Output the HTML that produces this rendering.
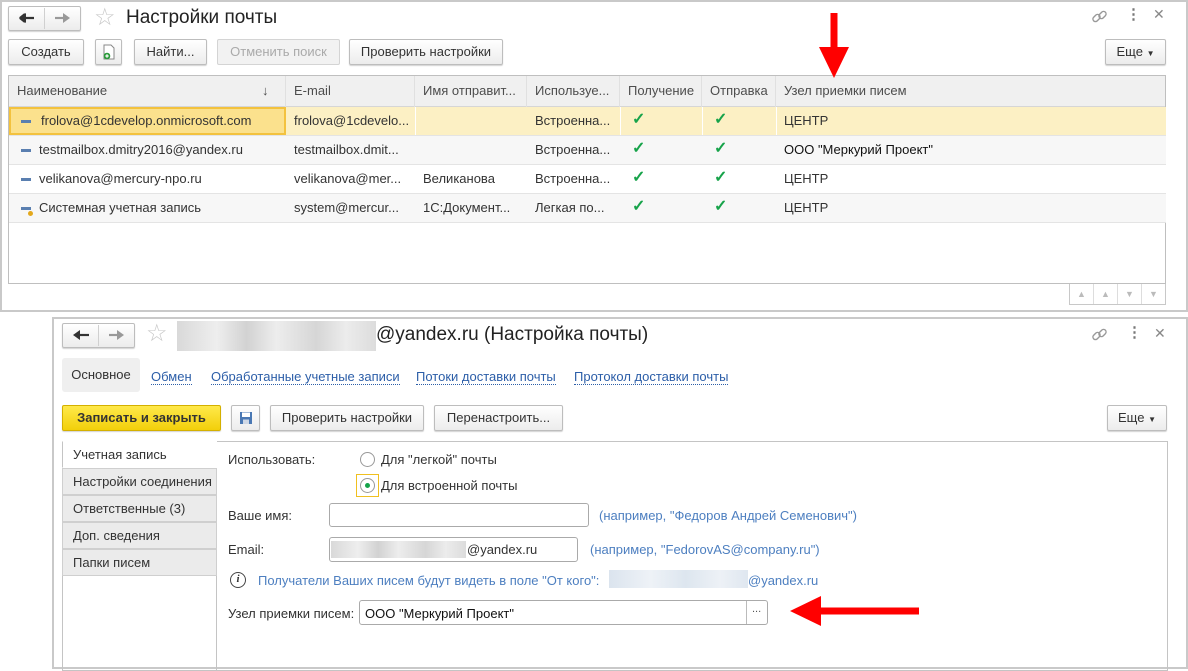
<!DOCTYPE html>
<html><head><meta charset="utf-8"><style>
*{box-sizing:border-box;margin:0;padding:0}
body{width:1188px;height:669px;background:#fff;position:relative;overflow:hidden;font-family:"Liberation Sans",Arial,sans-serif;font-size:13px;color:#333}
.a{position:absolute;white-space:nowrap}
.win{position:absolute;border:2px solid #c9c9c9;background:#fff}
.btn{position:absolute;height:26px;border:1px solid #bdbdbd;border-radius:2px;background:linear-gradient(#fff,#ececec);box-shadow:0 1px 1px rgba(0,0,0,.18);text-align:center;line-height:24px;font-size:13px;color:#333}
.nav{position:absolute;height:25px;border:1px solid #bdbdbd;border-radius:2px;background:linear-gradient(#fff,#ececec);box-shadow:0 1px 1px rgba(0,0,0,.18)}
.th{position:absolute;top:0;height:31px;line-height:30px;padding-left:8px;color:#4d4d4d;border-right:1px solid #e0e0e0}
.row{position:absolute;left:0;width:1157px;height:29px;border-bottom:1px solid #e4e4e4}
.cell{position:absolute;top:0;height:28px;line-height:28px;padding-left:8px;color:#333}
.ck{position:absolute;color:#17a34a;font-size:16px;font-weight:bold;top:1px}
.lnk{position:absolute;color:#2c5ea8;border-bottom:1px dotted #2c5ea8;line-height:15px}
.tab{position:absolute;left:62px;width:155px;height:27px;background:#ebebeb;border:1px solid #cfcfcf;line-height:25px;padding-left:10px;color:#333}
.hint{color:#4d7fc0}
.blur{position:absolute;background:linear-gradient(90deg,#d9d9d9,#eeeeee 20%,#d2d2d2 35%,#ededed 50%,#d6d6d6 70%,#ececec 85%,#dcdcdc)}
.inp{position:absolute;border:1px solid #aaa;border-radius:3px;background:#fff}
</style></head><body>

<!-- TOP WINDOW -->
<div class="win" style="left:0;top:0;width:1188px;height:312px"></div>
<div class="nav" style="left:8px;top:6px;width:73px"></div>
<div class="a" style="left:44px;top:8px;width:1px;height:21px;background:#d0d0d0"></div>
<svg class="a" style="left:19px;top:13px" width="16" height="10"><path d="M1 5h14M1 5l5-4M1 5l5 4" stroke="#333" stroke-width="2.2" fill="#333"/><polygon points="0,5 7,0 7,10" fill="#333"/></svg>
<svg class="a" style="left:54px;top:13px" width="16" height="10"><path d="M1 5h12" stroke="#999" stroke-width="2.2"/><polygon points="16,5 9,0 9,10" fill="#999"/></svg>
<div class="a" style="left:94px;top:3px;font-size:24px;color:#c8c8c8">&#9734;</div>
<div class="a" style="left:126px;top:7px;font-size:19px;color:#222">Настройки почты</div>
<svg class="a" style="left:1091px;top:8px" width="17" height="17" viewBox="0 0 17 17"><g fill="none" stroke="#999" stroke-width="1.4"><rect x="1.5" y="7.5" width="8" height="5" rx="2.5" transform="rotate(-45 5.5 10)"/><rect x="7.5" y="4.5" width="8" height="5" rx="2.5" transform="rotate(-45 11.5 7)"/></g></svg>
<div class="a" style="left:1126px;top:5px;font-size:15px;color:#777;font-weight:bold">&#8942;</div>
<div class="a" style="left:1153px;top:6px;font-size:14px;color:#888">&#10005;</div>

<div class="btn" style="left:8px;top:39px;width:76px">Создать</div>
<div class="btn" style="left:95px;top:39px;width:27px"><svg width="14" height="16" viewBox="0 0 14 16" style="margin-top:4px"><path d="M2 1h7l3 3v11H2z" fill="#fff" stroke="#888"/><circle cx="5" cy="12" r="3.3" fill="#2a9a3a"/><path d="M3.3 12h3.4M5 10.3v3.4" stroke="#fff" stroke-width="1.2"/></svg></div>
<div class="btn" style="left:134px;top:39px;width:73px">Найти...</div>
<div class="btn" style="left:217px;top:39px;width:123px;color:#aaa;box-shadow:none;background:#f2f2f2;border-color:#d4d4d4">Отменить поиск</div>
<div class="btn" style="left:349px;top:39px;width:154px">Проверить настройки</div>
<div class="btn" style="left:1105px;top:39px;width:61px">Еще <span style="font-size:8px">&#9660;</span></div>

<div class="a" style="left:8px;top:75px;width:1158px;height:209px;border:1px solid #bfbfbf">
 <div class="a" style="left:0;top:0;width:1156px;height:31px;background:#f0f0f0;border-bottom:1px solid #d6d6d6"></div>
 <div class="th" style="left:0;width:277px">Наименование<span style="position:absolute;left:253px">&#8595;</span></div>
 <div class="th" style="left:277px;width:129px">E-mail</div>
 <div class="th" style="left:406px;width:112px">Имя отправит...</div>
 <div class="th" style="left:518px;width:93px">Используе...</div>
 <div class="th" style="left:611px;width:82px">Получение</div>
 <div class="th" style="left:693px;width:74px">Отправка</div>
 <div class="th" style="left:767px;width:389px;border-right:none">Узел приемки писем</div>

 <div class="row" style="top:31px;background:#fcf0c4">
  <div class="cell" style="left:0;width:277px;background:#fbe18d;border:2px solid #f3c23e;line-height:24px;padding-left:30px">frolova@1cdevelop.onmicrosoft.com</div>
  <div class="cell" style="left:277px">frolova@1cdevelo...</div>
  <div class="a" style="left:406px;top:0;height:28px;border-left:1px solid #fff"></div>
  <div class="cell" style="left:518px">Встроенна...</div>
  <div class="a" style="left:611px;top:0;height:28px;border-left:1px solid #fff"></div>
  <div class="a" style="left:693px;top:0;height:28px;border-left:1px solid #fff"></div>
  <div class="a" style="left:767px;top:0;height:28px;border-left:1px solid #fff"></div>
  <div class="cell" style="left:767px">ЦЕНТР</div>
 </div>
 <div class="row" style="top:60px;background:#f7f7f7">
  <div class="cell" style="left:0;padding-left:30px">testmailbox.dmitry2016@yandex.ru</div>
  <div class="cell" style="left:277px">testmailbox.dmit...</div>
  <div class="cell" style="left:518px">Встроенна...</div>
  <div class="cell" style="left:767px;color:#111">ООО "Меркурий Проект"</div>
 </div>
 <div class="row" style="top:89px;background:#fff">
  <div class="cell" style="left:0;padding-left:30px">velikanova@mercury-npo.ru</div>
  <div class="cell" style="left:277px">velikanova@mer...</div>
  <div class="cell" style="left:406px">Великанова</div>
  <div class="cell" style="left:518px">Встроенна...</div>
  <div class="cell" style="left:767px">ЦЕНТР</div>
 </div>
 <div class="row" style="top:118px;background:#f7f7f7">
  <div class="cell" style="left:0;padding-left:30px">Системная учетная запись</div>
  <div class="cell" style="left:277px">system@mercur...</div>
  <div class="cell" style="left:406px">1С:Документ...</div>
  <div class="cell" style="left:518px">Легкая по...</div>
  <div class="cell" style="left:767px">ЦЕНТР</div>
 </div>
 <div class="a" style="left:12px;top:44px;width:10px;height:3px;background:#5a7fb0"></div>
 <div class="a" style="left:12px;top:73px;width:10px;height:3px;background:#5a7fb0"></div>
 <div class="a" style="left:12px;top:102px;width:10px;height:3px;background:#5a7fb0"></div>
 <div class="a" style="left:12px;top:131px;width:10px;height:3px;background:#5a7fb0"></div>
 <div class="a" style="left:19px;top:135px;width:5px;height:5px;border-radius:50%;background:#e3a81c"></div>
 <div class="ck" style="left:623px;top:33px">&#10003;</div><div class="ck" style="left:705px;top:33px">&#10003;</div>
 <div class="ck" style="left:623px;top:62px">&#10003;</div><div class="ck" style="left:705px;top:62px">&#10003;</div>
 <div class="ck" style="left:623px;top:91px">&#10003;</div><div class="ck" style="left:705px;top:91px">&#10003;</div>
 <div class="ck" style="left:623px;top:120px">&#10003;</div><div class="ck" style="left:705px;top:120px">&#10003;</div>
</div>
<div class="a" style="left:1069px;top:284px;width:97px;height:21px;border:1px solid #c8c8c8;border-top:none;background:#fff;color:#bbb;font-size:9px;display:flex">
 <div style="flex:1;text-align:center;line-height:20px;border-right:1px solid #ddd">&#9650;</div>
 <div style="flex:1;text-align:center;line-height:20px;border-right:1px solid #ddd">&#9650;</div>
 <div style="flex:1;text-align:center;line-height:20px;border-right:1px solid #ddd">&#9660;</div>
 <div style="flex:1;text-align:center;line-height:20px">&#9660;</div>
</div>
<svg class="a" style="left:815px;top:12px" width="38" height="68"><rect x="15.5" y="1" width="7" height="36" fill="#f00"/><polygon points="4,35 34,35 19,66" fill="#f00"/></svg>

<!-- BOTTOM WINDOW -->
<div class="win" style="left:52px;top:317px;width:1136px;height:352px"></div>
<div class="nav" style="left:62px;top:323px;width:73px"></div>
<div class="a" style="left:98px;top:325px;width:1px;height:21px;background:#d0d0d0"></div>
<svg class="a" style="left:73px;top:330px" width="16" height="10"><path d="M3 5h13" stroke="#333" stroke-width="2.2"/><polygon points="0,5 7,0 7,10" fill="#333"/></svg>
<svg class="a" style="left:108px;top:330px" width="16" height="10"><path d="M1 5h12" stroke="#999" stroke-width="2.2"/><polygon points="16,5 9,0 9,10" fill="#999"/></svg>
<div class="a" style="left:146px;top:319px;font-size:24px;color:#c8c8c8">&#9734;</div>
<div class="blur" style="left:177px;top:321px;width:199px;height:30px"></div>
<div class="a" style="left:376px;top:324px;font-size:19px;color:#222">@yandex.ru (Настройка почты)</div>
<svg class="a" style="left:1091px;top:326px" width="17" height="17" viewBox="0 0 17 17"><g fill="none" stroke="#999" stroke-width="1.4"><rect x="1.5" y="7.5" width="8" height="5" rx="2.5" transform="rotate(-45 5.5 10)"/><rect x="7.5" y="4.5" width="8" height="5" rx="2.5" transform="rotate(-45 11.5 7)"/></g></svg>
<div class="a" style="left:1127px;top:323px;font-size:15px;color:#777;font-weight:bold">&#8942;</div>
<div class="a" style="left:1154px;top:325px;font-size:14px;color:#888">&#10005;</div>

<div class="a" style="left:62px;top:358px;width:78px;height:34px;background:#efefef;border-radius:3px;line-height:34px;text-align:center;color:#333">Основное</div>
<div class="lnk" style="left:151px;top:369px">Обмен</div>
<div class="lnk" style="left:211px;top:369px">Обработанные учетные записи</div>
<div class="lnk" style="left:416px;top:369px">Потоки доставки почты</div>
<div class="lnk" style="left:574px;top:369px">Протокол доставки почты</div>

<div class="btn" style="left:62px;top:405px;width:159px;background:linear-gradient(#ffe94a,#f2cf0a);border-color:#d4b000;font-weight:bold;color:#333">Записать и закрыть</div>
<div class="btn" style="left:231px;top:405px;width:29px"><svg width="14" height="14" viewBox="0 0 14 14" style="margin-top:5px"><rect x="1" y="1" width="12" height="12" fill="#4a78b4"/><rect x="3" y="1.5" width="8" height="4.5" fill="#fff"/><rect x="4" y="8.5" width="6" height="4.5" fill="#cfd8e6"/></svg></div>
<div class="btn" style="left:270px;top:405px;width:154px">Проверить настройки</div>
<div class="btn" style="left:434px;top:405px;width:129px">Перенастроить...</div>
<div class="btn" style="left:1107px;top:405px;width:60px">Еще <span style="font-size:8px">&#9660;</span></div>

<div class="a" style="left:62px;top:441px;width:1106px;height:230px;border:1px solid #c4c4c4"></div>
<div class="a" style="left:216px;top:441px;width:1px;height:230px;background:#c4c4c4"></div>
<div class="tab" style="top:441px;background:#fff;border-color:#fff;border-left:1px solid #c4c4c4">Учетная запись</div>
<div class="tab" style="top:468px">Настройки соединения</div>
<div class="tab" style="top:495px">Ответственные (3)</div>
<div class="tab" style="top:522px">Доп. сведения</div>
<div class="tab" style="top:549px">Папки писем</div>

<div class="a" style="left:228px;top:452px">Использовать:</div>
<div class="a" style="left:360px;top:452px;width:15px;height:15px;border:1px solid #999;border-radius:50%;background:#fff"></div>
<div class="a" style="left:381px;top:452px">Для "легкой" почты</div>
<div class="a" style="left:356px;top:474px;width:23px;height:23px;border:1px solid #f0c020"></div>
<div class="a" style="left:360px;top:478px;width:15px;height:15px;border:1px solid #999;border-radius:50%;background:#fff"></div>
<div class="a" style="left:365px;top:483px;width:5px;height:5px;border-radius:50%;background:#15a34a"></div>
<div class="a" style="left:381px;top:478px">Для встроенной почты</div>

<div class="a" style="left:228px;top:508px">Ваше имя:</div>
<div class="inp" style="left:329px;top:503px;width:260px;height:24px"></div>
<div class="a hint" style="left:599px;top:508px">(например, "Федоров Андрей Семенович")</div>

<div class="a" style="left:228px;top:542px">Email:</div>
<div class="inp" style="left:329px;top:537px;width:249px;height:25px"></div>
<div class="blur" style="left:331px;top:541px;width:135px;height:17px"></div>
<div class="a" style="left:467px;top:542px">@yandex.ru</div>
<div class="a hint" style="left:590px;top:542px">(например, "FedorovAS@company.ru")</div>

<div class="a" style="left:230px;top:572px;width:16px;height:16px;border:1.5px solid #444;border-radius:50%;text-align:center;font:italic bold 11px/13px 'Liberation Serif',serif;color:#333">i</div>
<div class="a hint" style="left:258px;top:573px">Получатели Ваших писем будут видеть в поле "От кого":</div>
<div class="blur" style="left:609px;top:570px;width:139px;height:18px;background:linear-gradient(90deg,#dbe4ee,#eef2f7 30%,#dde6ef 55%,#edf1f6 80%,#dfe7f0)"></div>
<div class="a hint" style="left:748px;top:573px">@yandex.ru</div>

<div class="a" style="left:228px;top:606px">Узел приемки писем:</div>
<div class="inp" style="left:359px;top:600px;width:409px;height:25px"></div>
<div class="a" style="left:365px;top:606px;color:#111">ООО "Меркурий Проект"</div>
<div class="a" style="left:746px;top:601px;width:1px;height:23px;background:#bbb"></div>
<div class="a" style="left:752px;top:603px;font-size:11px;color:#555">...</div>
<svg class="a" style="left:788px;top:595px" width="134" height="34"><polygon points="2,16 33,1 33,31" fill="#f00"/><rect x="31" y="12.5" width="100" height="7" fill="#f00"/></svg>
</body></html>
